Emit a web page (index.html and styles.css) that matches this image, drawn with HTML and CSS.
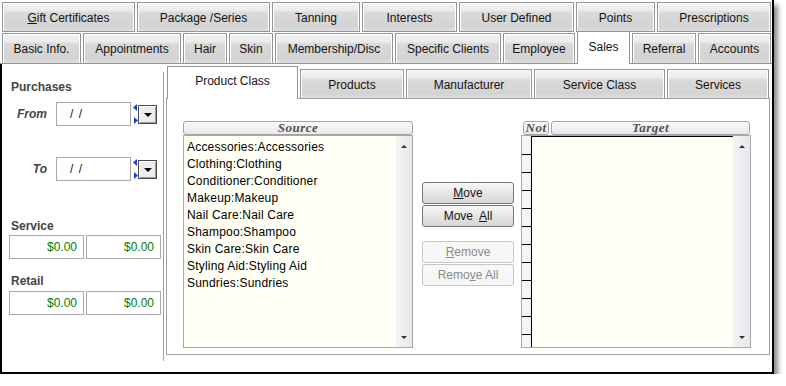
FILE: index.html
```html
<!DOCTYPE html>
<html>
<head>
  <title>Client - Sales</title>
  <meta charset='utf-8'>
  <link rel="stylesheet" href="styles.css">
</head>
<body>

<div class="window">
  <div class="tabrow first">
    <div class="tab gift"><span><u>G</u>ift Certificates</span></div>
    <div class="tab package">Package /Series</div>
    <div class="tab tanning">Tanning</div>
    <div class="tab interests">Interests</div>
    <div class="tab userdef">User Defined</div>
    <div class="tab points">Points</div>
    <div class="tab rx">Prescriptions</div>
  </div>
  <div class="tabrow second">
    <div class="tab basic">Basic Info.</div>
    <div class="tab appts">Appointments</div>
    <div class="tab hair">Hair</div>
    <div class="tab skin">Skin</div>
    <div class="tab member">Membership/Disc</div>
    <div class="tab specific">Specific Clients</div>
    <div class="tab employee">Employee</div>
    <div class="tab sales current">Sales</div>
    <div class="tab referral">Referral</div>
    <div class="tab accounts">Accounts</div>
  </div>

  <div class="content">
    <div class="side">
      <h3>Purchases</h3>
      <div class="daterow">
        <label>From</label>
        <div class="datebox">/ /</div>
        <svg class="spin" width="5" height="20" viewBox="0 0 5 20"><polygon points="4,0 4,7 0,3.5" fill="#1a3fd6"/><polygon points="1,13 1,20 5,16.5" fill="#1a3fd6"/></svg>
        <div class="drop"><span class="caret"></span></div>
      </div>
      <div class="daterow to">
        <label>To</label>
        <div class="datebox">/ /</div>
        <svg class="spin" width="5" height="20" viewBox="0 0 5 20"><polygon points="4,0 4,7 0,3.5" fill="#1a3fd6"/><polygon points="1,13 1,20 5,16.5" fill="#1a3fd6"/></svg>
        <div class="drop"><span class="caret"></span></div>
      </div>

      <h3 class="service">Service</h3>
      <div class="moneyrow">
        <div class="money">$0.00</div>
        <div class="money">$0.00</div>
      </div>

      <h3 class="retail">Retail</h3>
      <div class="moneyrow last">
        <div class="money">$0.00</div>
        <div class="money">$0.00</div>
      </div>
    </div>

    <div class="panel">
      <div class="subtabs">
        <div class="tab sub current pclass">Product Class</div>
        <div class="tab sub products">Products</div>
        <div class="tab sub maker">Manufacturer</div>
        <div class="tab sub sclass">Service Class</div>
        <div class="tab sub services">Services</div>
      </div>
      <div class="panel-body">
        <div class="listcol">
          <div class="colhead">Source</div>
          <div class="listbox">
            <div class="items">
              <div>Accessories:Accessories</div>
              <div>Clothing:Clothing</div>
              <div>Conditioner:Conditioner</div>
              <div>Makeup:Makeup</div>
              <div>Nail Care:Nail Care</div>
              <div>Shampoo:Shampoo</div>
              <div>Skin Care:Skin Care</div>
              <div>Styling Aid:Styling Aid</div>
              <div>Sundries:Sundries</div>
            </div>
            <div class="scroll"><span class="up"></span><span class="down"></span></div>
          </div>
        </div>

        <div class="buttons">
          <button class="btn"><u>M</u>ove</button>
          <button class="btn">Move&nbsp; <u>A</u>ll</button>
          <button class="btn off gap"><u>R</u>emove</button>
          <button class="btn off">Remo<u>v</u>e All</button>
        </div>

        <div class="listcol target">
          <div class="headrow">
            <div class="colhead not">Not</div>
            <div class="colhead wide">Target</div>
          </div>
          <div class="listbox">
            <div class="notcol">
              <div></div><div></div><div></div><div></div><div></div><div></div>
              <div></div><div></div><div></div><div></div><div></div><div></div>
            </div>
            <div class="items picked"></div>
            <div class="scroll wide"><span class="up"></span><span class="down"></span></div>
          </div>
        </div>
      </div>
    </div>
  </div>
</div>

</body>
</html>
```

FILE: styles.css
```css
body {
  margin:0;
  background:#fff;
  font-family:"Liberation Sans", Arial, sans-serif;
  font-size:12px;
  color:#141414;
}

.window {
  width:772px;
  height:372px;
  border-right:2px solid #000;
  border-bottom:2px solid #000;
  box-shadow:4px 5px 5px rgba(0,0,0,0.45);
  background:#fff;
  display:flex;
  flex-direction:column;
}

/* tab strips */
.tabrow {
  display:flex;
  gap:2px;
  padding-left:2px;
}
.tabrow.first {
  margin-top:2px;
  height:30px;
}
.tabrow.second {
  margin-top:1px;
  height:30px;
  border-bottom:1px solid #959595;
}

.tab {
  box-sizing:border-box;
  border:1px solid #959595;
  box-shadow:inset 1px 1px 0 #fff, inset -1px 0 0 #fff;
  background:linear-gradient(#f1f1f1 0, #ececec 26%, #dadada 34%, #d3d3d3 84%, #dfdfdf 100%);
  display:flex;
  align-items:center;
  justify-content:center;
  white-space:nowrap;
  padding-top:1px;
}
.tabrow.second .tab {
  border-bottom:0;
}
.tabrow.second .tab.current {
  align-self:flex-end;
  height:33px;
  margin-bottom:-1px;
  background:#fff;
  padding-bottom:3px;
}

.gift { width:133px; }
.package { width:133px; }
.tanning { width:88px; }
.interests { width:95px; }
.userdef { width:115px; }
.points { width:79px; }
.rx { width:114px; }

.basic { width:79px; }
.appts { width:98px; }
.hair { width:44px; }
.skin { width:44px; }
.member { width:118px; }
.specific { width:106px; }
.employee { width:72px; }
.sales { width:53px; }
.referral { width:64px; }
.accounts { width:73px; }

/* body of the form */
.content {
  flex:1;
  display:flex;
  gap:2px;
  border-left:2px solid #000;
}

.side {
  box-sizing:border-box;
  width:162px;
  height:289px;
  margin-top:8px;
  padding:8px 0 0 7px;
  border-right:1px solid #a0a0a0;
}
.side h3 {
  margin:0 0 0 2px;
  font-size:12px;
  line-height:15px;
  font-weight:bold;
  color:#444;
}
.side h3.service { margin-top:38px; }
.side h3.retail { margin-top:15px; }

.daterow {
  display:flex;
  align-items:center;
  height:24px;
  margin-top:7px;
}
.daterow.to { margin-top:31px; }
.daterow label {
  width:38px;
  margin-right:9px;
  text-align:right;
  font-style:italic;
  font-weight:bold;
  color:#444;
}
.datebox {
  box-sizing:border-box;
  width:75px;
  height:24px;
  border:1px solid #a8a8b0;
  padding-left:13px;
  line-height:22px;
  letter-spacing:1px;
}
.spin {
  margin-left:2px;
}
.drop {
  box-sizing:border-box;
  width:19px;
  height:19px;
  border:1px solid #4a4a4a;
  box-shadow:inset 1px 1px 0 #fff, inset -1px -1px 0 #9a9a9a;
  background:#efebef;
  display:flex;
  align-items:center;
  justify-content:center;
}
.caret {
  width:0;
  height:0;
  border-left:4px solid transparent;
  border-right:4px solid transparent;
  border-top:4px solid #000;
  margin-top:1px;
}

.moneyrow {
  display:flex;
  gap:2px;
  margin-top:1px;
}
.moneyrow.last { margin-top:2px; }
.money {
  box-sizing:border-box;
  width:75px;
  height:24px;
  border:1px solid #a8a8b0;
  padding-right:6px;
  text-align:right;
  line-height:22px;
  color:#008000;
}

/* inner tab control */
.panel {
  width:604px;
  height:289px;
  margin-top:2px;
  display:flex;
  flex-direction:column;
}
.subtabs {
  height:32px;
  display:flex;
  align-items:flex-end;
  gap:2px;
  padding-left:1px;
}
.tab.sub {
  height:29px;
  border-bottom:0;
}
.tab.sub.current {
  height:33px;
  margin-bottom:-1px;
  background:#fff;
  padding-bottom:5px;
  position:relative;
}
.pclass { width:131px; }
.products { width:104px; }
.maker { width:126px; }
.sclass { width:131px; }
.services { width:102px; }

.panel-body {
  flex:1;
  border:1px solid #a0a0a0;
  display:flex;
  align-items:flex-start;
  padding:22px 0 0 16px;
}

.listcol {
  width:230px;
  display:flex;
  flex-direction:column;
}
.colhead {
  box-sizing:border-box;
  height:14px;
  border:1px solid #a4a4a4;
  border-radius:3px;
  background:linear-gradient(#f9f9f9, #e9e9e9);
  font:italic bold 13px "Liberation Serif", serif;
  letter-spacing:0.5px;
  line-height:12px;
  color:#505050;
  text-align:center;
}
.headrow {
  display:flex;
  gap:2px;
  padding-left:2px;
}
.colhead.not { width:26px; }
.colhead.wide { width:199px; }

.listbox {
  box-sizing:border-box;
  height:213px;
  border:1px solid #a8a8a8;
  background:#fffff5;
  display:flex;
  overflow:hidden;
}
.items {
  flex:1;
  padding:3px 0 0 3px;
  line-height:17px;
  color:#000;
  letter-spacing:0.2px;
}
.items.picked {
  padding:0;
  border-top:1px solid #000;
}
.scroll {
  width:16px;
  background:linear-gradient(to right, #f5f3f6, #e9e7eb);
  display:flex;
  flex-direction:column;
  justify-content:space-between;
  align-items:center;
  padding:9px 0 8px;
  box-sizing:border-box;
}
.scroll.wide { width:17px; }
.up, .down {
  width:0;
  height:0;
  border-left:3px solid transparent;
  border-right:3px solid transparent;
}
.up { border-bottom:3px solid #333; }
.down { border-top:3px solid #333; }

.notcol {
  width:9px;
  padding-top:1px;
  border-right:1px solid #000;
  background:#f6f2f6;
}
.notcol div {
  height:17px;
  border-bottom:1px solid #000;
}

.buttons {
  width:92px;
  margin:61px 7px 0 9px;
}
.btn {
  display:block;
  box-sizing:border-box;
  width:92px;
  height:22px;
  margin:0 0 1px;
  padding:0;
  border:1px solid #777;
  border-radius:3px;
  background:linear-gradient(#f7f7f7, #e6e6e6 50%, #d6d6d6);
  font:12px "Liberation Sans", Arial, sans-serif;
  color:#141414;
  text-align:center;
}
.btn.off {
  border-color:#c6c6c6;
  background:#f7f7f7;
  color:#8a8a8a;
}
.btn.gap { margin-top:14px; }
```
